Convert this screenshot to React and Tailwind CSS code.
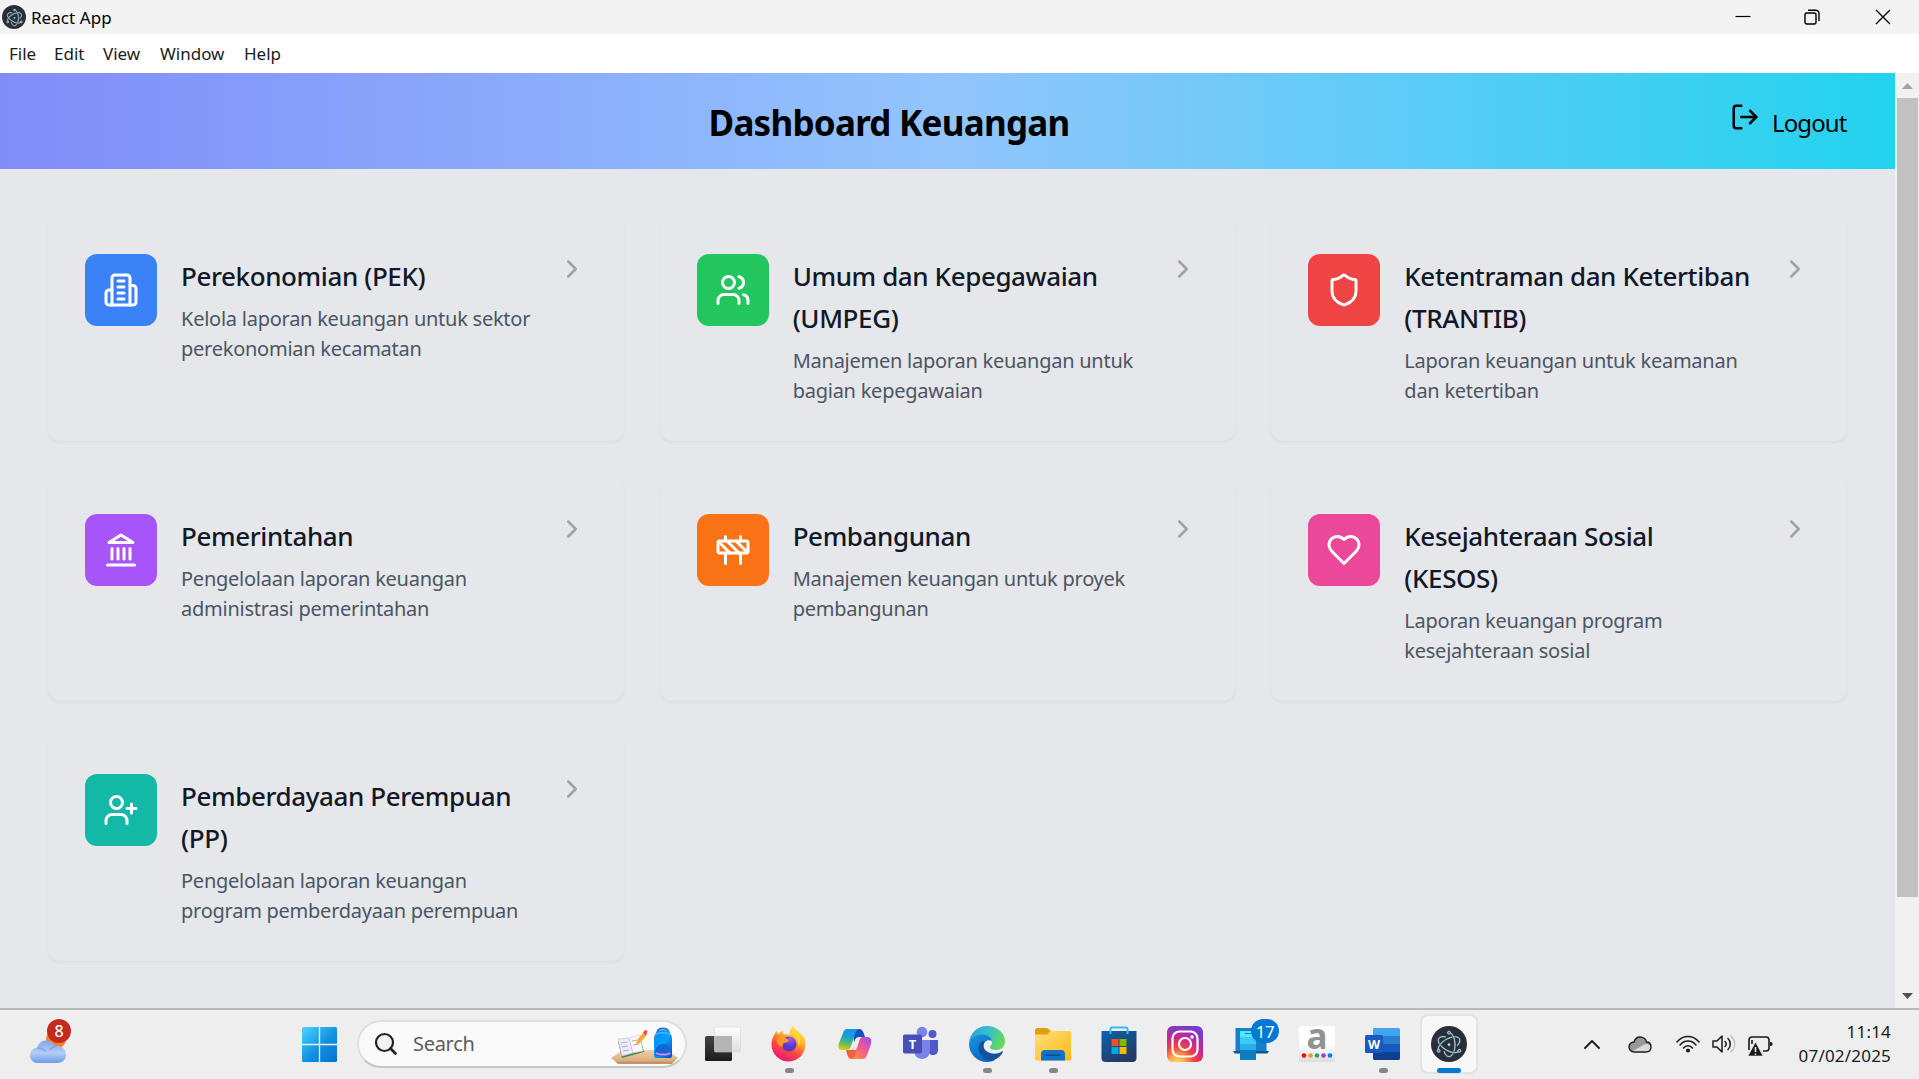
import React from "react";
import { SiElectron } from "react-icons/si";
import { LogOut, ChevronRight } from "lucide-react";

const line = {
  fill: "none",
  stroke: "currentColor",
  strokeWidth: 2,
  strokeLinecap: "round",
  strokeLinejoin: "round",
};

const Glyph = ({ children }) => (
  <svg viewBox="0 0 24 24" className="size-9 text-white" {...line}>
    {children}
  </svg>
);

const icons = {
  building: (
    <>
      <path d="M6 22V4a2 2 0 0 1 2-2h8a2 2 0 0 1 2 2v18Z" />
      <path d="M6 12H4a2 2 0 0 0-2 2v6a2 2 0 0 0 2 2h2" />
      <path d="M18 9h2a2 2 0 0 1 2 2v9a2 2 0 0 1-2 2h-2" />
      <path d="M10 6h4M10 10h4M10 14h4M10 18h4" />
    </>
  ),
  users: (
    <>
      <path d="M16 21v-2a4 4 0 0 0-4-4H6a4 4 0 0 0-4 4v2" />
      <circle cx="9" cy="7" r="4" />
      <path d="M22 21v-2a4 4 0 0 0-3-3.87" />
      <path d="M16 3.13a4 4 0 0 1 0 7.75" />
    </>
  ),
  shield: (
    <path d="M20 13c0 5-3.5 7.5-7.66 8.95a1 1 0 0 1-.67-.01C7.5 20.5 4 18 4 13V6a1 1 0 0 1 1-1c2 0 4.5-1.2 6.24-2.72a1.17 1.17 0 0 1 1.52 0C14.51 3.81 17 5 19 5a1 1 0 0 1 1 1z" />
  ),
  landmark: (
    <>
      <path d="M3 22h18M6 18v-7M10 18v-7M14 18v-7M18 18v-7" />
      <path d="M12 2l8 5H4z" />
      <path d="M3.500 18h17" strokeWidth="0" />
    </>
  ),
  construction: (
    <>
      <rect x="2" y="6" width="20" height="8" rx="1" />
      <path d="M17 14v7M7 14v7M17 3v3M7 3v3M10 14 2.3 6.3M14 6l7.7 7.7M8 6l8 8" />
    </>
  ),
  heart: (
    <path d="M19 14c1.49-1.46 3-3.21 3-5.5A5.5 5.5 0 0 0 16.5 3c-1.76 0-3 .5-4.5 2-1.5-1.5-2.74-2-4.5-2A5.5 5.5 0 0 0 2 8.5c0 2.3 1.5 4.05 3 5.5l7 7Z" />
  ),
  userPlus: (
    <>
      <path d="M16 21v-2a4 4 0 0 0-4-4H6a4 4 0 0 0-4 4v2" />
      <circle cx="9" cy="7" r="4" />
      <path d="M19 8v6M22 11h-6" />
    </>
  ),
};

const cards = [
  { icon: "building", bg: "bg-[#3b82f6]", title: ["Perekonomian (PEK)"], text: ["Kelola laporan keuangan untuk sektor", "perekonomian kecamatan"] },
  { icon: "users", bg: "bg-[#22c55e]", title: ["Umum dan Kepegawaian", "(UMPEG)"], text: ["Manajemen laporan keuangan untuk", "bagian kepegawaian"] },
  { icon: "shield", bg: "bg-[#ef4444]", title: ["Ketentraman dan Ketertiban", "(TRANTIB)"], text: ["Laporan keuangan untuk keamanan", "dan ketertiban"] },
  { icon: "landmark", bg: "bg-[#a855f7]", title: ["Pemerintahan"], text: ["Pengelolaan laporan keuangan", "administrasi pemerintahan"] },
  { icon: "construction", bg: "bg-[#f97316]", title: ["Pembangunan"], text: ["Manajemen keuangan untuk proyek", "pembangunan"] },
  { icon: "heart", bg: "bg-[#ec4899]", title: ["Kesejahteraan Sosial", "(KESOS)"], text: ["Laporan keuangan program", "kesejahteraan sosial"] },
  { icon: "userPlus", bg: "bg-[#14b8a6]", title: ["Pemberdayaan Perempuan", "(PP)"], text: ["Pengelolaan laporan keuangan", "program pemberdayaan perempuan"] },
];

const Card = ({ icon, bg, title, text }) => (
  <div className="flex h-[224px] items-start rounded-xl border border-[#e5e7eb] bg-[#e5e7eb] p-9 shadow-[0_1.5px_3px_rgba(0,0,0,0.04)]">
    <div className={`flex size-[72px] shrink-0 items-center justify-center rounded-xl ${bg}`}>
      <Glyph>{icons[icon]}</Glyph>
    </div>
    <div className="ml-6 min-w-0 flex-1 whitespace-nowrap pt-px">
      <h2 className="text-[26px] font-medium leading-[42px] tracking-[-0.4px] text-[#111827]">
        {title.map((t) => <span key={t} className="block">{t}</span>)}
      </h2>
      <p className="mt-[7px] text-[20px] leading-[30px] tracking-[-0.25px] text-[#4b5563]">
        {text.map((t) => <span key={t} className="block">{t}</span>)}
      </p>
    </div>
    <ChevronRight size={30} className="shrink-0 text-[#9ca3af]" />
  </div>
);

const Electron = ({ className, mark }) => (
  <span className={`flex items-center justify-center rounded-full bg-[#2b2e3a] ${className}`}>
    <SiElectron className={`overflow-visible text-[#9fdce3] ${mark}`} />
  </span>
);

const Ico = ({ children }) => (
  <svg viewBox="0 0 36 36" className="size-9 overflow-visible">{children}</svg>
);

const Weather = () => (
  <div className="relative size-[42px]">
    <svg viewBox="0 0 42 42" className="size-[42px]">
      <defs>
        <linearGradient id="cl" x1="0" y1="0" x2="0" y2="1">
          <stop offset="0" stopColor="#7fa6ea" /><stop offset=".55" stopColor="#b3cdf8" /><stop offset="1" stopColor="#6f9ae6" />
        </linearGradient>
      </defs>
      <circle cx="26" cy="18" r="10" fill="#f58220" />
      <path d="M8 42a7.500 7.500 0 0 1-8-7c0-5 3-8 7-8 1.500-5 5-7.500 9-7.500s7 2 9 5.500c6-1 11 3 11 9 0 5-4 8-9 8z" fill="url(#cl)" />
      <path d="M7 27c4 0 7 1 9 4M20 29c2-3 4-4 7-4" fill="none" stroke="#7ea2e4" strokeWidth="1.5" />
    </svg>
    <span className="absolute -top-0.5 left-[17px] flex size-6 items-center justify-center rounded-full bg-[#c42b1c] text-[16px] font-medium leading-none text-white">8</span>
  </div>
);

const Start = () => (
  <svg viewBox="0 0 35 35" className="size-[35px]">
    <defs>
      <linearGradient id="win" x1="0" y1="0" x2="1" y2="1">
        <stop offset="0" stopColor="#4cd3ff" /><stop offset=".55" stopColor="#1190e0" /><stop offset="1" stopColor="#0670cf" />
      </linearGradient>
    </defs>
    <rect width="35" height="35" rx="1.5" fill="url(#win)" />
    <path d="M17.500 0v35M0 17.500h35" stroke="#eee" strokeWidth="1.3" />
  </svg>
);

const StudyArt = () => (
  <svg viewBox="0 0 68 38" className="h-[38px] w-[68px]">
    <defs>
      <linearGradient id="pack" x1="0" y1="0" x2="1" y2="1"><stop stopColor="#1587f0" /><stop offset=".5" stopColor="#00a0ff" /><stop offset="1" stopColor="#1445b0" /></linearGradient>
      <linearGradient id="desk" x1="0" y1="0" x2="0" y2="1"><stop stopColor="#f0cfa5" /><stop offset="1" stopColor="#d9ac7c" /></linearGradient>
    </defs>
    <path d="M0 31l12-8h44l11 8-6 4H6z" fill="url(#desk)" />
    <path d="M1 31l5 3.500h55l5-3.500-5 6H7z" fill="#c29468" />
    <path d="M7 14l4 17 22-6-4-16z" fill="#369046" />
    <path d="M7 12l11-1 4 15-11 3z" fill="#eeeafa" stroke="#c8c0d8" strokeWidth=".6" />
    <path d="M18 11l11-3 3 16-10 2z" fill="#fbf8ff" stroke="#c8c0d8" strokeWidth=".6" />
    <path d="M10 16l6-1M11 20l6-1M12 24l6-1M21 14l5-1M22 18l6-1" stroke="#a9a1bd" strokeWidth=".9" />
    <path d="M25 18l1-5 6-7 3 3-6 7z" fill="#ffab2e" />
    <path d="M32 6l2-3 2.500 1-1.500 5z" fill="#f3483b" />
    <path d="M46 6c1-6 11-6 12 0" fill="none" stroke="#2575d5" strokeWidth="1.800" />
    <path d="M43 12c0-6 4-9 9-9s9 3 9 9v17c0 1-1 2-2 2H45c-1 0-2-1-2-2z" fill="url(#pack)" />
    <path d="M44 26c0-12 16-12 16 0v2c0 1-1 1-2 1H46c-1 0-2 0-2-1z" fill="#1466d6" />
    <path d="M45 26c2 2 12 2 14 0" fill="none" stroke="#c58cf5" strokeWidth="1.800" />
    <path d="M44 8c3-3 13-3 16 0" fill="none" stroke="#74c8ff" strokeWidth="1" />
  </svg>
);

const TaskView = () => (
  <Ico>
    <defs>
      <linearGradient id="tvd" x1="0" y1="0" x2="0" y2="1"><stop stopColor="#444" /><stop offset="1" stopColor="#1c1c1c" /></linearGradient>
      <linearGradient id="tvl" x1="0" y1="0" x2="0" y2="1"><stop stopColor="#fff" /><stop offset="1" stopColor="#dedede" /></linearGradient>
    </defs>
    <rect x="0" y="10" width="27" height="25" rx="1.500" fill="url(#tvd)" />
    <rect x="9.500" y="1" width="26" height="25" rx="1.500" fill="url(#tvl)" stroke="#d7d7d7" strokeWidth=".6" />
    <rect x="9.500" y="10" width="17.500" height="16" fill="#b4b4b4" />
  </Ico>
);

const Firefox = () => (
  <Ico>
    <defs>
      <linearGradient id="ff" x1=".8" y1="0" x2=".3" y2="1"><stop stopColor="#fff44f" /><stop offset=".35" stopColor="#ffb52b" /><stop offset=".65" stopColor="#ff4a3c" /><stop offset="1" stopColor="#e3157f" /></linearGradient>
      <radialGradient id="ffp" cx=".6" cy=".2"><stop stopColor="#a557f5" /><stop offset="1" stopColor="#5b36c7" /></radialGradient>
    </defs>
    <path d="M22 0c1 3 4 4 7 7 3.500 2 5.500 6 5.500 11a17 17 0 0 1-34 1C.5 13 3 8 6 5c0 2 .5 3 1 3.500C8 6.500 10 5.500 12 5c-.5 1.500 0 3 1 3.500 3-.5 4 0 6 .5-1-4 1-7 3-9z" fill="url(#ff)" />
    <circle cx="18" cy="18" r="7.500" fill="url(#ffp)" />
    <path d="M6 13c3-3 7-2 10 0l2 1c-1 2-3 3-5 3-1 1-2 2-1 4-5-1-7-5-6-8z" fill="#ff9a22" />
    <path d="M20 8c6 2 8 7 7 12 2-2 3-7 1-10-2-3-5-4-7-5z" fill="#ffd93a" />
  </Ico>
);

const Copilot = () => (
  <Ico>
    <defs>
      <linearGradient id="cpa" x1=".4" y1="0" x2=".2" y2="1"><stop stopColor="#1a8fef" /><stop offset=".4" stopColor="#19a6c6" /><stop offset=".75" stopColor="#7cc242" /><stop offset="1" stopColor="#f0c419" /></linearGradient>
      <linearGradient id="cpb" x1=".9" y1="0" x2=".2" y2="1"><stop stopColor="#a44cf0" /><stop offset=".5" stopColor="#f05a90" /><stop offset="1" stopColor="#ff8a4a" /></linearGradient>
    </defs>
    <path d="M16 3h6c3 0 4 2 5 5l1 3h-5c-4 0-5 2-6 6z" fill="#1a4fc0" />
    <path d="M10 3h12c-3 1-4 4-5 8l-3 9c-1 3-2 4-5 4H5c-4 0-4-3-3-7L6 7c1-3 2-4 4-4z" fill="url(#cpa)" />
    <path d="M9 24h6l3-6 3 6-3 9h-3c-3 0-4-2-5-5z" fill="#f4603a" />
    <path d="M26 11h4c4 0 5 3 4 7l-4 11c-1 3-2 4-5 4H14c3-1 4-4 5-8l3-10c1-3 2-4 4-4z" fill="url(#cpb)" />
    <path d="M19.500 12h3.500l-4 12h-3.500z" fill="#eee" />
  </Ico>
);

const Teams = () => (
  <Ico>
    <circle cx="29.500" cy="8" r="4" fill="#5059c9" />
    <path d="M25 14h10v10c0 3-2 5-5 5s-5-2-5-5z" fill="#5059c9" />
    <circle cx="19" cy="6" r="5.300" fill="#7b83eb" />
    <path d="M11 14h16v10c0 5-3 9-8 9s-8-4-8-9z" fill="#7b83eb" />
    <rect x="0" y="8.500" width="19" height="19" rx="1.800" fill="#464eb8" />
    <text x="9.500" y="22.500" textAnchor="middle" fontSize="13" fontWeight="700" fill="#fff">T</text>
  </Ico>
);

const Edge = () => (
  <Ico>
    <defs>
      <linearGradient id="eg1" x1="0" y1=".3" x2="1" y2=".6"><stop stopColor="#2aa6e0" /><stop offset=".5" stopColor="#35c1c6" /><stop offset="1" stopColor="#66dd4e" /></linearGradient>
      <linearGradient id="eg2" x1="0" y1="0" x2=".6" y2="1"><stop stopColor="#1b95e2" /><stop offset="1" stopColor="#0a66bf" /></linearGradient>
    </defs>
    <path d="M0 18C0 8 8 0 18 0s18 7 18 15c0 6-4 9-9 9-4 0-6-1-6-3 0-1 2-2 2-4 0-4-4-7-9-7C7 10 1 13 0 18z" fill="url(#eg1)" />
    <path d="M0 18c1-6 7-9.500 13-9.500 5 0 9 2.500 10 6.500-2-1-5-1-7 1-4 4-2 14 5 17 2 1 3 1 5 1-2 1-5 2-8 2C8 36 0 28 0 18z" fill="url(#eg2)" />
    <path d="M14 15c-5 2-6 9-2 14 4 6 11 7 15 4 3-1 6-5 7-7 0-1-1-1-2 0-3 2-8 2-11 1-6-2-8-7-5-12z" fill="#14529c" />
  </Ico>
);

const Explorer = () => (
  <Ico>
    <defs><linearGradient id="fe" x1="0" y1="0" x2="1" y2="1"><stop stopColor="#ffe07a" /><stop offset="1" stopColor="#fdb913" /></linearGradient></defs>
    <path d="M0 4c0-1 1-2 2-2h9c1 0 2 .5 2.500 1L16 5v6H0z" fill="#e0a00c" />
    <path d="M0 8.500h12L16 5h18.500c1 0 1.500 1 1.500 1.500V33c0 1-.5 1.500-1.500 1.500h-33C.5 34.500 0 34 0 33z" fill="url(#fe)" />
    <path d="M6 34.500V28c0-2.500 1.500-4 4-4h16c2.500 0 4 1.500 4 4v6.500z" fill="#0f70c4" />
    <path d="M11 29.300h14" stroke="#0a4a8c" strokeWidth="1.500" strokeLinecap="round" />
  </Ico>
);

const Store = () => (
  <Ico>
    <defs><linearGradient id="st" x1="0" y1="0" x2=".6" y2="1"><stop stopColor="#0a63b0" /><stop offset="1" stopColor="#243a63" /></linearGradient></defs>
    <path d="M.5 5h35v27c0 2.500-1.500 4-4 4h-27c-2.500 0-4-1.500-4-4z" fill="url(#st)" />
    <path d="M9.500 8V3c0-1 .5-1.500 1.500-1.500h14c1 0 1.500.5 1.500 1.500v5" fill="none" stroke="#35bdf2" strokeWidth="2" />
    <path d="M10.500 13h7v7h-7z" fill="#f25022" /><path d="M18.500 13h7v7h-7z" fill="#7fba00" />
    <path d="M10.500 21h7v7h-7z" fill="#00a4ef" /><path d="M18.500 21h7v7h-7z" fill="#ffb900" />
  </Ico>
);

const Instagram = () => (
  <Ico>
    <defs>
      <radialGradient id="ig" cx=".28" cy="1.050" r="1.050"><stop stopColor="#ffdc73" /><stop offset=".2" stopColor="#fdb04c" /><stop offset=".45" stopColor="#f0443f" /><stop offset=".7" stopColor="#c62a8e" /><stop offset="1" stopColor="#7a3acb" /></radialGradient>
    </defs>
    <rect width="36" height="36" rx="6" fill="url(#ig)" />
    <rect x="5.500" y="5.500" width="25" height="25" rx="7" fill="none" stroke="#fff" strokeWidth="2.200" />
    <circle cx="18" cy="18" r="6" fill="none" stroke="#fff" strokeWidth="2.200" />
    <circle cx="25" cy="11" r="1.700" fill="#fff" />
  </Ico>
);

const PhoneLink = () => (
  <div className="relative size-9">
    <Ico>
      <path d="M2.500 2h31v24h-31z" fill="#1480cc" />
      <path d="M0 25h36l-1.500 2.500h-33z" fill="#0b5a94" />
      <path d="M7 5h16v28c0 .6-.4 1-1 1H8c-.6 0-1-.4-1-1z" fill="#28b1e8" />
      <path d="M7 5h16v6H7z" fill="#50e6ff" /><path d="M7 11h16v7H7z" fill="#3ccbf4" />
      <path d="M7 24h16v9c0 .6-.4 1-1 1H8c-.6 0-1-.4-1-1z" fill="#0f7cbf" />
      <path d="M12 7.500h6" stroke="#118" strokeWidth="1" opacity=".5" />
    </Ico>
    <span className="absolute -top-[7px] left-[18px] flex h-6 w-7 items-center justify-center rounded-full bg-[#0078d4] text-[17px] leading-none tracking-[-0.5px] text-white">17</span>
  </div>
);

const AApp = () => (
  <Ico>
    <defs><linearGradient id="aa" x1="0" y1="0" x2="0" y2="1"><stop offset=".5" stopColor="#fff" /><stop offset="1" stopColor="#dcdcdc" /></linearGradient></defs>
    <rect width="36" height="36" fill="url(#aa)" />
    <text x="18" y="23" textAnchor="middle" fontSize="35" fontWeight="700" fill="#929292">a</text>
    <circle cx="5" cy="29.500" r="2.300" fill="#f00" /><circle cx="11.500" cy="29.500" r="2.300" fill="#f39a1e" />
    <circle cx="18" cy="29.500" r="2.300" fill="#1fae5c" /><circle cx="24.500" cy="29.500" r="2.300" fill="#9a3be0" />
    <circle cx="31" cy="29.500" r="2.300" fill="#0f7ee0" />
  </Ico>
);

const Word = () => (
  <Ico>
    <path d="M8 3.500C8 2.600 8.600 2 9.500 2h24c.9 0 1.500.6 1.500 1.500V10H8z" fill="#41a5ee" />
    <path d="M8 10h27v8H8z" fill="#2b7cd3" /><path d="M8 18h27v8H8z" fill="#185abd" />
    <path d="M8 26h27v6.500c0 .9-.6 1.500-1.500 1.500h-24c-.9 0-1.500-.6-1.500-1.500z" fill="#103f91" />
    <rect x="0" y="9" width="18" height="18" rx="1.500" fill="#185abd" />
    <text x="9" y="22.500" textAnchor="middle" fontSize="12.500" fontWeight="700" fill="#fff">W</text>
  </Ico>
);

const apps = [
  { C: TaskView }, { C: Firefox, run: true }, { C: Copilot }, { C: Teams }, { C: Edge, run: true },
  { C: Explorer, run: true }, { C: Store }, { C: Instagram }, { C: PhoneLink }, { C: AApp }, { C: Word, run: true },
];

const Tray = () => (
  <div className="flex items-center text-[#1b1b1b]">
    <svg viewBox="0 0 16 10" className="mr-7 h-2.5 w-4"><path d="M1 9l7-7 7 7" fill="none" stroke="currentColor" strokeWidth="1.800" strokeLinecap="round" strokeLinejoin="round" /></svg>
    <svg viewBox="0 0 24 17" className="mr-6 h-[17px] w-6">
      <path d="M6 16a5 5 0 0 1 0-10c1-3 3-5 6-5s6 2 6.500 5c3 0 4.500 2 4.500 5s-2 5-5 5z" fill="#989898" />
      <path d="M5 15l12-7c4 0 6 2 6 4s-2 4-5 4H6z" fill="#dadada" />
      <path d="M6 16a5 5 0 0 1 0-10c1-3 3-5 6-5s6 2 6.500 5c3 0 4.500 2 4.500 5s-2 5-5 5z" fill="none" stroke="currentColor" strokeWidth="1.400" />
    </svg>
    <svg viewBox="0 0 24 18" className="mr-3 h-[18px] w-6" fill="none" stroke="currentColor" strokeWidth="1.500" strokeLinecap="round">
      <path d="M1 7c6-7.500 16-7.500 22 0M4 10c4-5.500 12-5.500 16 0M7.500 13c2.500-3 6.500-3 9 0" /><circle cx="12" cy="15.500" r="1.300" fill="currentColor" />
    </svg>
    <svg viewBox="0 0 24 20" className="mr-3 h-5 w-6" fill="none" stroke="currentColor" strokeWidth="1.500" strokeLinecap="round" strokeLinejoin="round">
      <path d="M1 7h4l5-5v16l-5-5H1z" /><path d="M13 7.500c1.500 1.500 1.500 3.500 0 5M16 4.500c3 3 3 8 0 11" /><path d="M19 2c5 5 5 11 0 16" stroke="#c4c4c4" />
    </svg>
    <svg viewBox="0 0 25 20" className="mt-1 h-5 w-[25px]">
      <path d="M1 14V4c0-2 1-3 3-3h14c2 0 3 1 3 3v8c0 2-1 3-3 3h-3M4 4v4" fill="none" stroke="currentColor" strokeWidth="1.600" />
      <path d="M22 6h1c1 0 1.500 1 1.500 2s-.5 2-1.500 2h-1z" fill="currentColor" />
      <path d="M7.500 6L15 20H0z" fill="currentColor" stroke="#eee" strokeWidth=".6" /><path d="M7.500 11v5M7.500 17.500v1.200" stroke="#fff" strokeWidth="1.500" />
    </svg>
  </div>
);

export default function App() {
  return (
    <div className="flex h-[1079px] w-[1919px] flex-col overflow-hidden bg-[#e5e7eb] font-['Noto_Sans','Open_Sans',sans-serif]">
      <div className="flex h-[34px] shrink-0 items-center bg-[#f3f3f3] text-black">
        <Electron className="ml-0.5 size-6" mark="size-[17px] [stroke:currentColor] [stroke-width:0.5px]" />
        <span className="ml-[5px] text-[17px] leading-none tracking-[0.05px]">React App</span>
        <div className="ml-auto flex items-center pr-[28px]">
          <svg viewBox="0 0 16 16" className="mr-[53px] size-4"><path d="M.5 7.500h15" stroke="#000" strokeWidth="1.200" /></svg>
          <svg viewBox="0 0 16 16" className="mr-[55px] size-4" fill="none" stroke="#000" strokeWidth="1.400"><rect x="1" y="4" width="11" height="11" rx="1.800" /><path d="M4 1.200h7.500A3.300 3.300 0 0 1 15 4.500V12" /></svg>
          <svg viewBox="0 0 16 16" className="size-4"><path d="M1 1l14 14M15 1L1 15" stroke="#000" strokeWidth="1.400" /></svg>
        </div>
      </div>
      <div className="flex h-[39px] shrink-0 items-center bg-white pl-[9px] text-[17px] leading-none tracking-[0px] text-[#1b1b1b]">
        <span className="w-[45px]">File</span>
        <span className="w-[49px]">Edit</span>
        <span className="w-[57px]">View</span>
        <span className="w-[84px]">Window</span>
        <span>Help</span>
      </div>
      <div className="flex h-[935px] shrink-0">
        <div className="flex w-[1895px] flex-col">
          <header className="flex h-24 shrink-0 items-center justify-between bg-[linear-gradient(to_right,#818cf8,#93c5fd,#22d3ee)] px-12">
            <span />
            <h1 className="pt-1 text-[35px] font-bold leading-[48px] tracking-[-0.75px] text-black">Dashboard Keuangan</h1>
            <div className="flex items-center pt-[3px] text-[24px] leading-9 text-black">
              <LogOut size={30} className="mr-3 -mt-[11px]" />
              <span className="w-[75px] whitespace-nowrap tracking-[-0.9px]">Logout</span>
            </div>
          </header>
          <main className="grid grid-cols-3 gap-9 px-12 pt-12">
            {cards.map((c) => <Card key={c.icon} {...c} />)}
          </main>
        </div>
        <div className="flex w-6 flex-col items-center bg-[#f1f1f1]">
          <svg viewBox="0 0 24 25" className="h-[25px] w-6 shrink-0"><path d="M7 16h11l-5.500-6z" fill="#a3a3a3" /></svg>
          <div className="ml-px h-[799px] w-[21px] shrink-0 bg-[#c1c1c1]" />
          <svg viewBox="0 0 24 25" className="mt-auto h-[25px] w-6 shrink-0"><path d="M7 10h11l-5.500 6z" fill="#505050" /></svg>
        </div>
      </div>
      <div className="flex h-[71px] shrink-0 items-center border-t-2 border-[#b9b9b9] bg-[#eeeeee] pb-px">
        <div className="flex w-[302px] pb-1 pl-[30px]"><Weather /></div>
        <div className="w-[55px]"><Start /></div>
        <div className="flex h-12 w-[330px] items-center rounded-full border-2 border-[#dfdfdf] border-b-[#c6c6c6] bg-[#fafafa] pl-[15px]">
          <svg viewBox="0 0 24 24" className="size-6"><circle cx="10.500" cy="10.500" r="8.500" fill="#f2f2f2" stroke="#222" strokeWidth="2.200" /><path d="M16.500 16.500l5 5" stroke="#222" strokeWidth="2.800" strokeLinecap="round" /></svg>
          <span className="ml-[15px] text-[20px] tracking-[-0.3px] text-[#5c5c5c]">Search</span>
          <div className="ml-auto mr-[6px] mt-[3px]"><StudyArt /></div>
        </div>
        <div className="ml-[3px] flex items-center">
          {apps.map(({ C, run }, i) => (
            <div key={i} className="relative flex h-[68px] w-[66px] items-center justify-center">
              <C />
              {run && <span className="absolute bottom-[5px] h-[5px] w-[9px] rounded-full bg-[#868686]" />}
            </div>
          ))}
          <div className="flex w-[66px] justify-center">
            <div className="relative flex h-[60px] w-[58px] items-center justify-center rounded-lg border-2 border-[#e3e3e3] bg-[#f8f8f8]">
              <Electron className="size-9" mark="size-[26px] [stroke:currentColor] [stroke-width:0.45px]" />
              <span className="absolute -bottom-px h-[5px] w-6 rounded-full bg-[#0078d4]" />
            </div>
          </div>
        </div>
        <div className="ml-auto flex items-center pr-[28px]">
          <Tray />
          <div className="ml-6 w-[94px] whitespace-nowrap text-right text-[17px] leading-6 tracking-[0.2px] text-[#1b1b1b]">
            <div>11:14</div>
            <div>07/02/2025</div>
          </div>
        </div>
      </div>
    </div>
  );
}
